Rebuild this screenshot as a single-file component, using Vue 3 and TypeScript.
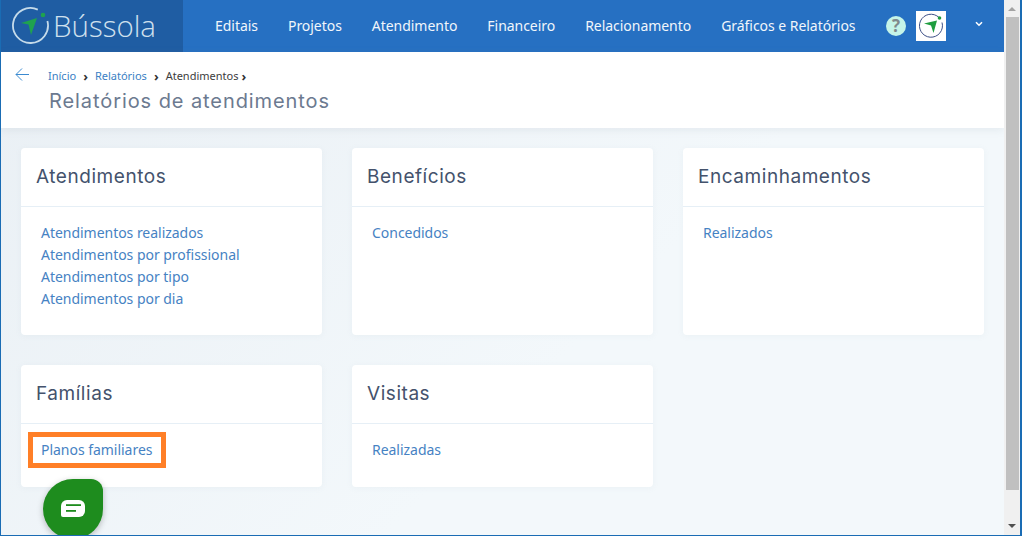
<script setup lang="ts">
interface Card { title: string; links: string[]; tall: boolean; boxed?: boolean }
const nav: string[] = ['Editais', 'Projetos', 'Atendimento', 'Financeiro', 'Relacionamento', 'Gráficos e Relatórios']
const cards: Card[] = [
  { title: 'Atendimentos', links: ['Atendimentos realizados', 'Atendimentos por profissional', 'Atendimentos por tipo', 'Atendimentos por dia'], tall: true },
  { title: 'Benefícios', links: ['Concedidos'], tall: true },
  { title: 'Encaminhamentos', links: ['Realizados'], tall: true },
  { title: 'Famílias', links: ['Planos familiares'], tall: false, boxed: true },
  { title: 'Visitas', links: ['Realizadas'], tall: false },
]
</script>

<template>
  <div class="window">
    <div class="viewport">
      <header class="topbar">
        <div class="brand">
          <svg class="logo" width="38" height="38" viewBox="0 0 38 38">
            <path d="M26.8 2.6A17.5 17.5 0 1 0 36.4 14" fill="none" stroke="#c5dbea" stroke-width="1.8" />
            <circle cx="32" cy="8" r="2.3" fill="#1fa24f" />
            <path d="M10 16 26 11 20 28 17.5 17.5Z" fill="#1fa24f" />
          </svg>
          <span class="brand-name">Bússola</span>
        </div>
        <nav class="nav">
          <a v-for="n in nav" :key="n" class="nav-item">{{ n }}</a>
        </nav>
        <div class="help">?</div>
        <div class="avatar">
          <svg width="26" height="26" viewBox="0 0 26 26">
            <path d="M21 4.5A11.5 11.5 0 1 0 24 9.5" fill="none" stroke="#3c4f86" stroke-width="1" />
            <circle cx="21.5" cy="5" r="1.8" fill="#1f9d3f" />
            <path d="M6 10.5 19 7.5 15.5 20 13 12.5Z" fill="#1f9d3f" />
          </svg>
        </div>
        <svg class="chev" width="8" height="6" viewBox="0 0 8 6">
          <path d="M1 1.2 4 4.2 7 1.2" fill="none" stroke="#fff" stroke-width="1.6" />
        </svg>
      </header>

      <section class="pagehead">
        <svg class="back" width="14" height="13" viewBox="0 0 14 13">
          <path d="M14 6.5H1M7 .5 1 6.5l6 6" fill="none" stroke="#3b8ad0" stroke-width="1" />
        </svg>
        <div class="head-text">
          <div class="crumbs">
            <a class="crumb-link">Início</a><span class="sep">›</span>
            <a class="crumb-link">Relatórios</a><span class="sep">›</span>
            <span class="crumb-current">Atendimentos</span><span class="sep last">›</span>
          </div>
          <h1 class="page-title">Relatórios de atendimentos</h1>
        </div>
      </section>

      <main class="content">
        <article v-for="c in cards" :key="c.title" class="card" :class="{ tall: c.tall }">
          <h2 class="card-title">{{ c.title }}</h2>
          <ul class="card-links" :class="{ boxed: c.boxed }">
            <li v-for="l in c.links" :key="l"><a>{{ l }}</a></li>
          </ul>
        </article>
      </main>

      <button class="chat" aria-label="Chat">
        <svg width="24" height="17" viewBox="0 0 24 17">
          <path d="M6 0H18A6 6 0 0 1 24 6V11A6 6 0 0 1 18 17H2A2 2 0 0 1 0 15V6A6 6 0 0 1 6 0Z" fill="#fff" />
          <rect x="5" y="4.2" width="15" height="1.8" fill="#1e8c1e" />
          <rect x="5" y="10" width="10" height="1.8" fill="#1e8c1e" />
        </svg>
      </button>
    </div>

    <aside class="scrollbar">
      <span class="arrow up"></span>
      <span class="thumb"></span>
      <span class="arrow down"></span>
    </aside>
  </div>
</template>

<style scoped>
.window {
  width: 1022px;
  height: 536px;
  box-sizing: border-box;
  border-left: 1px solid #1a6cb4;
  border-right: 2px solid #1a6cb4;
  border-bottom: 1px solid #1a6cb4;
  display: flex;
  overflow: hidden;
  font-family: "Noto Sans", "Open Sans", sans-serif;
}
.viewport {
  width: 1003px;
  flex: none;
  position: relative;
  background: linear-gradient(135deg, #e9eff4 0%, #f3f8fb 60%, #f3f8fb 100%);
  display: flex;
  flex-direction: column;
}
.topbar {
  height: 52px;
  background: #2670c2;
  display: flex;
  align-items: center;
  margin-left: -1px;
  flex: none;
}
.brand {
  width: 183px;
  height: 52px;
  flex: none;
  background: #1f5da3;
  display: flex;
  align-items: center;
  padding-left: 11px;
  box-sizing: border-box;
}
.logo { flex: none; }
.brand-name {
  color: #cfe0ee;
  font-family: "Open Sans", sans-serif;
  font-weight: 300;
  font-size: 29.5px;
  margin-left: 4px;
  line-height: 52px;
}
.nav {
  display: flex;
  gap: 30px;
  margin-left: 32px;
  width: 671px;
  flex: none;
}
.nav-item {
  color: #f1f6fb;
  font-size: 14px;
  letter-spacing: -.04px;
  line-height: 20px;
  white-space: nowrap;
}
.help {
  width: 20px;
  height: 20px;
  border-radius: 50%;
  background: #c5f4e8;
  color: #7f8a8c;
  font: 700 17px/20px "Open Sans", sans-serif;
  text-align: center;
  flex: none;
}
.avatar {
  width: 30px;
  height: 30px;
  background: #fff;
  margin-left: 10px;
  display: flex;
  align-items: center;
  justify-content: center;
  flex: none;
}
.chev { margin-left: 29px; margin-bottom: 5px; flex: none; }

.pagehead {
  height: 76px;
  background: #fff;
  box-shadow: 0 2px 8px rgba(120, 140, 160, .12);
  display: flex;
  flex: none;
  position: relative;
}
.back { margin: 16px 0 0 14px; flex: none; }
.head-text { margin-left: 19px; }
.crumbs {
  margin-top: 15px;
  font-size: 11px;
  line-height: 18px;
  display: flex;
  align-items: center;
  white-space: nowrap;
}
.crumb-link { color: #3b7fc4; }
.crumb-current { color: #3d3d3d; }
.sep { color: #333; font-weight: 700; font-size: 13px; line-height: 16px; margin: 0 7px; }
.sep.last { margin-left: 3px; }
.page-title {
  margin: 3px 0 0 1px;
  font-family: Inter, sans-serif;
  font-weight: 400;
  font-size: 20px;
  line-height: 26px;
  letter-spacing: .92px;
  color: #6c7a90;
  white-space: nowrap;
}

.content {
  padding: 20px 0 0 20px;
  display: grid;
  grid-template-columns: repeat(3, 301px);
  column-gap: 30px;
  row-gap: 30px;
  align-items: start;
}
.card {
  background: #fff;
  border-radius: 4px;
  height: 122px;
  box-shadow: 0 1px 6px rgba(140, 160, 180, .08);
}
.card.tall { height: 187px; }
.card-title {
  margin: 0;
  height: 58px;
  padding-left: 15px;
  border-bottom: 1px solid #e6eff6;
  font-family: Inter, sans-serif;
  font-weight: 400;
  font-size: 19px;
  line-height: 58px;
  letter-spacing: .55px;
  color: #44526c;
}
.card-links {
  list-style: none;
  margin: 0;
  padding: 15px 0 0 20px;
  font-size: 14px;
  letter-spacing: -.03px;
  line-height: 22px;
  color: #4682c3;
}
.card-links.boxed li {
  display: inline-block;
  outline: 5px solid #ff7f27;
  margin: -2px 0 0 -8px;
  padding: 2px 9px 2px 8px;
  line-height: 22px;
}
.chat {
  position: absolute;
  left: 42px;
  top: 479px;
  width: 60px;
  height: 60px;
  border: 0;
  padding: 0 0 1px;
  background: #1e8c1e;
  border-radius: 50% 12px 50% 50%;
  box-shadow: 0 2px 6px rgba(0, 0, 0, .25);
  display: flex;
  align-items: center;
  justify-content: center;
}

.scrollbar {
  width: 16px;
  flex: none;
  background: #f0f0f0;
  position: relative;
  display: flex;
  flex-direction: column;
  padding-left: 2px;
  box-sizing: border-box;
}
.thumb { width: 13px; height: 473px; background: #c0c0c0; margin-top: 17px; }
.arrow { position: absolute; left: 4px; width: 0; height: 0; border-left: 4px solid transparent; border-right: 4px solid transparent; }
.arrow.up { top: 7px; border-bottom: 4px solid #a3a3a3; }
.arrow.down { bottom: 7px; border-top: 4px solid #505050; }
</style>

<style>
html, body { margin: 0; overflow: hidden; }
</style>
